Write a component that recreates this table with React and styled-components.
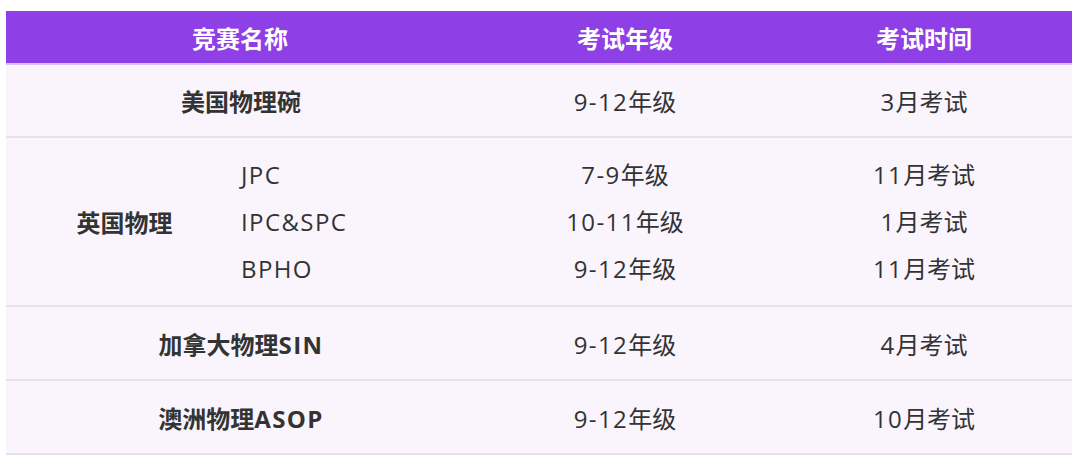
import React from 'react'
import styled, { createGlobalStyle } from 'styled-components';

const GlobalStyle = createGlobalStyle`
    body {
        margin: 0;
        background: #ffffff;
        font-family: "Open Sans", "Noto Sans CJK SC", sans-serif;
    }
`;

const Page = styled.div`
    padding: 11px 8px 0 6px;
`;

const Table = styled.div`
    width: 1066px;
    display: flex;
    flex-direction: column;
`;

const Row = styled.div`
    display: grid;
    grid-template-columns: 235px 233px 302px 296px;
    height: ${({h}) => h}px;
    background: ${({head}) => head ? '#8e3fe6' : '#faf5fd'};
    border-bottom: 2px solid ${({head}) => head ? '#d9bff5' : '#e6e2e8'};
    box-sizing: border-box;
`;

const Cell = styled.div`
    grid-column: ${({span}) => span ? `span ${span}` : 'auto'};
    display: flex;
    flex-direction: column;
    justify-content: center;
    align-items: ${({left}) => left ? 'flex-start' : 'center'};
    font-size: 24px;
    font-weight: ${({bold}) => bold ? 700 : 400};
    color: ${({head}) => head ? '#ffffff' : '#333333'};
    padding-left: ${({shift}) => shift || 0}px;
`;

const Latin = styled.span`
    letter-spacing: 1.4px;
`;

const Line = styled.div`
    line-height: 47px;
    white-space: nowrap;
`;

// wrap the latin runs so they get the wider spacing of the original font
function Txt({children}) {
    const parts = children.split(/([A-Za-z0-9&\-]+)/).filter(Boolean);
    return parts.map((p, i) => /[A-Za-z0-9]/.test(p) ? <Latin key={i}>{p}</Latin> : <span key={i}>{p}</span>);
}

const rows = [
    {name: '美国物理碗', grade: '9-12年级', time: '3月考试'},
    {name: '加拿大物理SIN', grade: '9-12年级', time: '4月考试'},
    {name: '澳洲物理ASOP', grade: '9-12年级', time: '10月考试'},
];

const uk = [
    {name: 'JPC', grade: '7-9年级', time: '11月考试'},
    {name: 'IPC&SPC', grade: '10-11年级', time: '1月考试'},
    {name: 'BPHO', grade: '9-12年级', time: '11月考试'},
];

function SimpleRow({row, h}) {
    return (
        <Row h={h}>
            <Cell span={2} bold shift={2}><div><Txt>{row.name}</Txt></div></Cell>
            <Cell><div><Txt>{row.grade}</Txt></div></Cell>
            <Cell><div><Txt>{row.time}</Txt></div></Cell>
        </Row>
    )
}

export default function App() {
    return (
        <Page>
            <GlobalStyle />
            <Table>
                <Row h={54} head>
                    <Cell span={2} head bold>竞赛名称</Cell>
                    <Cell head bold>考试年级</Cell>
                    <Cell head bold>考试时间</Cell>
                </Row>
                <SimpleRow row={rows[0]} h={73} />
                <Row h={169}>
                    <Cell bold shift={2}>英国物理</Cell>
                    <Cell left>{uk.map(u => <Line key={u.name}><Txt>{u.name}</Txt></Line>)}</Cell>
                    <Cell>{uk.map(u => <Line key={u.name}><Txt>{u.grade}</Txt></Line>)}</Cell>
                    <Cell>{uk.map(u => <Line key={u.name}><Txt>{u.time}</Txt></Line>)}</Cell>
                </Row>
                <SimpleRow row={rows[1]} h={74} />
                <SimpleRow row={rows[2]} h={74} />
            </Table>
        </Page>
    )
}
